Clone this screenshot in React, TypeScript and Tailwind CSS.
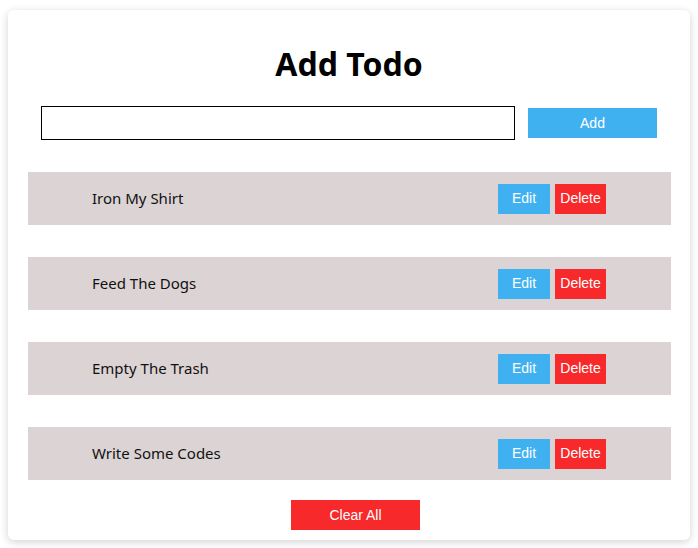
const todos = ['Iron My Shirt', 'Feed The Dogs', 'Empty The Trash', 'Write Some Codes'];

const App = () => {
  return (
    <div className="h-[548px] w-[698px] bg-white pt-[10px]">
      <div className="ml-[8px] h-[530px] w-[682px] rounded-md bg-white shadow-[0_2px_8px_rgba(0,0,0,0.18)]">
        <h1 className="pt-[30px] text-center text-[32px] leading-[48px] font-bold text-black [font-family:'Noto_Sans',sans-serif]">
          Add Todo
        </h1>
        <div className="mt-[18px] flex items-center px-[33px]">
          <input
            type="text"
            className="h-[34px] w-[474px] border border-black bg-white outline-none"
          />
          <button className="ml-[13px] h-[30px] w-[129px] bg-[#3fb1f1] text-[14px] text-white [font-family:'Liberation_Sans',Arial,sans-serif]">
            Add
          </button>
        </div>
        <ul className="mt-[32px] flex flex-col gap-[32px] pl-[20px]">
          {todos.map((todo) => (
            <li
              key={todo}
              className="flex h-[53px] w-[643px] items-center justify-between bg-[#dcd4d4] pl-[64px] pr-[65px]"
            >
              <span className="text-[15px] text-[#111] [font-family:'Noto_Sans',sans-serif]">{todo}</span>
              <div className="flex gap-[5px]">
                <button className="h-[30px] w-[52px] bg-[#3fb1f1] text-[14px] text-white [font-family:'Liberation_Sans',Arial,sans-serif]">
                  Edit
                </button>
                <button className="h-[30px] w-[51px] bg-[#f7292b] text-[14px] text-white [font-family:'Liberation_Sans',Arial,sans-serif]">
                  Delete
                </button>
              </div>
            </li>
          ))}
        </ul>
        <div className="mt-[20px] pl-[283px]">
          <button className="h-[30px] w-[129px] bg-[#f7292b] text-[14px] text-white [font-family:'Liberation_Sans',Arial,sans-serif]">
            Clear All
          </button>
        </div>
      </div>
    </div>
  );
};

export default App;
